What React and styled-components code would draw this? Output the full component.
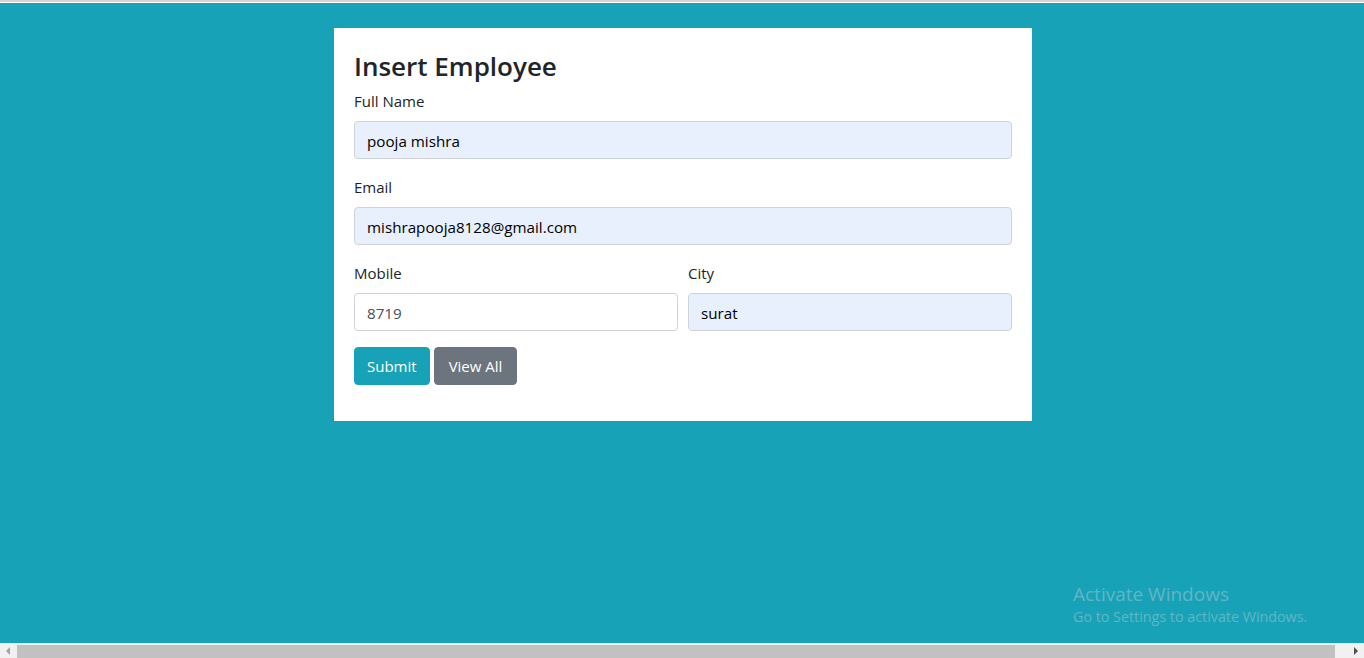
import React from 'react';
import styled, { createGlobalStyle } from 'styled-components';

const GlobalStyle = createGlobalStyle`
  html, body {
    margin: 0;
    padding: 0;
    overflow: hidden;
  }
  body {
    font-family: "Open Sans", "Noto Sans", sans-serif;
    color: #212529;
  }
`;

const Page = styled.div`
  display: flex;
  flex-direction: column;
  width: 1364px;
  height: 658px;
`;

const TopLine = styled.div`
  height: 2px;
  background: #d4d4d4;
  border-bottom: 1px solid #ffffff;
`;

const Stage = styled.main`
  position: relative;
  flex: 1;
  background: #17a2b8;
  display: flex;
  justify-content: center;
  align-items: flex-start;
  padding: 25px 0 0 2px;
`;

const Card = styled.div`
  width: 698px;
  box-sizing: border-box;
  background: #ffffff;
  padding: 22px 20px 36px;
`;

const Title = styled.h3`
  margin: 0 0 7px;
  font-size: 26px;
  font-weight: 600;
  line-height: 32px;
  color: #212529;
`;

const Group = styled.div`
  display: flex;
  flex-direction: column;
  margin-bottom: 16px;
`;

const Row = styled.div`
  display: grid;
  grid-template-columns: 1fr 1fr;
  column-gap: 10px;
`;

const Label = styled.label`
  font-size: 15px;
  line-height: 24px;
  margin-bottom: 8px;
  color: #212529;
`;

const Input = styled.input`
  box-sizing: border-box;
  height: 38px;
  width: 100%;
  padding: 7px 12px 5px;
  font-family: inherit;
  font-size: 15.2px;
  border: 1px solid #ced4da;
  border-radius: 4px;
  background: ${p => (p.$filled ? '#e8f0fe' : '#ffffff')};
  color: ${p => (p.$filled ? '#000000' : '#495057')};
  outline: none;
`;

const Actions = styled.div`
  display: flex;
  gap: 4px;
`;

const Button = styled.button`
  height: 38px;
  padding: 6px ${p => p.$px}px;
  font-family: inherit;
  font-size: 15px;
  color: #ffffff;
  border: 1px solid ${p => p.$bg};
  background: ${p => p.$bg};
  border-radius: 4px;
`;

const Watermark = styled.div`
  position: absolute;
  left: 1073px;
  top: 580px;
  color: #62b6c4;
  line-height: 1.2;
  .big {
    font-size: 19px;
  }
  .small {
    font-size: 14.3px;
    margin-top: 2px;
  }
`;

const Scrollbar = styled.div`
  display: flex;
  height: 15px;
  background: #f1f1f1;
  align-items: stretch;
`;

const Arrow = styled.div`
  width: 17px;
  display: flex;
  align-items: center;
  justify-content: center;
`;

const Thumb = styled.div`
  flex: 1;
  margin: 2px 12px 0 0;
  background: #c1c1c1;
`;

const App = () => {
  return (
    <>
      <GlobalStyle />
      <Page>
        <TopLine />
        <Stage>
          <Card>
            <Title>Insert Employee</Title>
            <Group>
              <Label>Full Name</Label>
              <Input $filled defaultValue="pooja mishra" />
            </Group>
            <Group>
              <Label>Email</Label>
              <Input $filled defaultValue="mishrapooja8128@gmail.com" />
            </Group>
            <Row>
              <Group>
                <Label>Mobile</Label>
                <Input defaultValue="8719" />
              </Group>
              <Group>
                <Label>City</Label>
                <Input $filled defaultValue="surat" />
              </Group>
            </Row>
            <Actions>
              <Button $bg="#17a2b8" $px={12}>Submit</Button>
              <Button $bg="#6c757d" $px={14}>View All</Button>
            </Actions>
          </Card>
          <Watermark>
            <div className="big">Activate Windows</div>
            <div className="small">Go to Settings to activate Windows.</div>
          </Watermark>
        </Stage>
        <Scrollbar>
          <Arrow>
            <svg width="5" height="8" viewBox="0 0 5 8">
              <path d="M4 0 L0 4 L4 8 Z" fill="#a3a3a3" />
            </svg>
          </Arrow>
          <Thumb />
          <Arrow>
            <svg width="5" height="8" viewBox="0 0 5 8">
              <path d="M1 0 L5 4 L1 8 Z" fill="#505050" />
            </svg>
          </Arrow>
        </Scrollbar>
      </Page>
    </>
  );
};

export default App;
